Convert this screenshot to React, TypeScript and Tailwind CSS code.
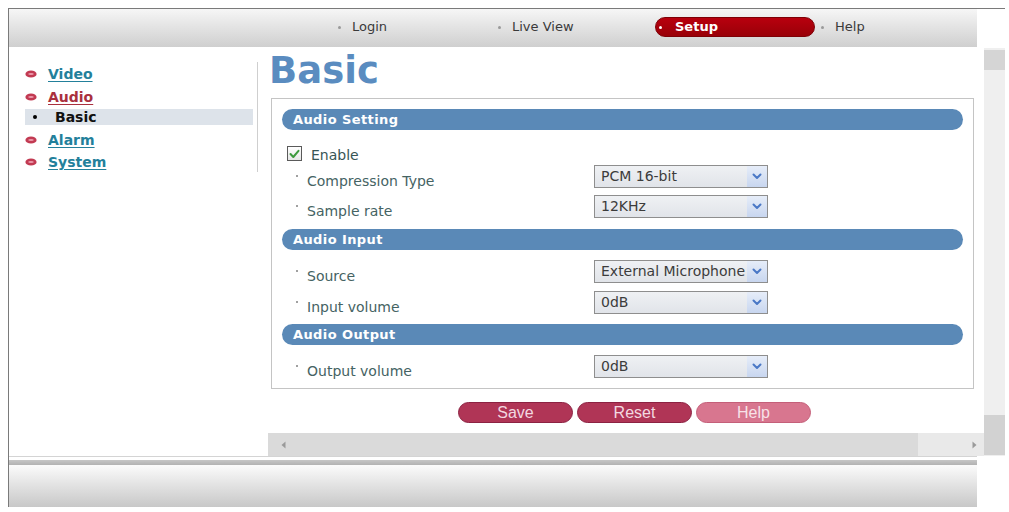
import React from "react";

function MenuIcon() {
  return (
    <svg width="12" height="8" viewBox="0 0 12 8" className="shrink-0">
      <ellipse cx="6" cy="4" rx="5.6" ry="3.6" fill="#c23a52" />
      <ellipse cx="6" cy="4" rx="2.8" ry="1.1" fill="#ec9aab" />
    </svg>
  );
}

function MenuLink({ label, color, mt }: { label: string; color: string; mt: string }) {
  return (
    <div className={`flex items-center h-[22px] pl-[16px] ${mt}`}>
      <MenuIcon />
      <span
        className={`ml-[11px] text-[14px] font-bold underline underline-offset-[2px] decoration-1 ${color}`}
      >
        {label}
      </span>
    </div>
  );
}

function Chevron() {
  return (
    <svg width="10" height="7" viewBox="0 0 10 7">
      <path d="M1.5 1.5 L5 5 L8.5 1.5" fill="none" stroke="#4a78c6" strokeWidth="2" strokeLinecap="round" strokeLinejoin="round" />
    </svg>
  );
}

function Select({ value }: { value: string }) {
  return (
    <div className="relative w-[174px] h-[23px] border border-[#8e8e8e] bg-linear-to-b from-[#eff1f4] to-[#e1e4e9] overflow-hidden">
      <span className="absolute left-[6px] top-0 leading-[21px] text-[14px] text-[#3c3c3c] whitespace-nowrap">{value}</span>
      <div className="absolute right-0 top-0 w-[20px] h-[21px] bg-linear-to-b from-[#e6edf9] to-[#c8d6ef] flex items-center justify-center">
        <Chevron />
      </div>
    </div>
  );
}

function Row({ label, value, mt }: { label: string; value: string; mt: string }) {
  return (
    <div className={`flex items-center h-[23px] ${mt}`}>
      <div className="w-[312px] flex items-center pl-[14px] pt-[8px]">
        <span className="w-[2px] h-[2px] bg-[#a0a0a0] relative top-[-5px]" />
        <span className="ml-[9px] text-[14px] text-[#456363] leading-[16px]">{label}</span>
      </div>
      <Select value={value} />
    </div>
  );
}

function Header({ label, mt }: { label: string; mt: string }) {
  return (
    <div className={`h-[21px] rounded-full bg-[#5a89b7] pl-[11px] text-white font-bold text-[13px] leading-[21px] tracking-[0.4px] ${mt}`}>
      {label}
    </div>
  );
}

function Btn({ label, light }: { label: string; light?: boolean }) {
  return (
    <div
      className={
        light
          ? "w-[115px] h-[21px] rounded-full bg-[#d8768f] border border-[#c45f79] text-[#f7e2e8] text-[16px] leading-[19px] text-center font-['Liberation_Sans',sans-serif]"
          : "w-[115px] h-[21px] rounded-full bg-[#b03556] border border-[#8c2242] text-[#f3d8e0] text-[16px] leading-[19px] text-center font-['Liberation_Sans',sans-serif]"
      }
    >
      {label}
    </div>
  );
}

export default function App() {
  return (
    <div className="w-[1009px] h-[512px] bg-white overflow-hidden font-['DejaVu_Sans',sans-serif]">
      <div className="ml-[8px] mt-[8px] w-[997px] h-[499px] border-t border-l border-[#7a7a7a] flex flex-col">
        {/* top nav */}
        <div className="h-[38px] w-[968px] shrink-0 bg-linear-to-b from-[#f6f6f6] to-[#cfcfcf] flex items-start pt-[8px] pl-[329px] text-[13px] text-[#3a3a3a]">
          <div className="w-[160px] h-[20px] flex items-center">
            <span className="w-[3px] h-[3px] rounded-full bg-[#9a9a9a]" />
            <span className="ml-[11px]">Login</span>
          </div>
          <div className="w-[157px] h-[20px] flex items-center">
            <span className="w-[3px] h-[3px] rounded-full bg-[#9a9a9a]" />
            <span className="ml-[11px]">Live View</span>
          </div>
          <div className="w-[160px] h-[20px] rounded-full bg-linear-to-b from-[#b8000e] to-[#990008] border border-[#7e0006] flex items-center pl-[3px]">
            <span className="w-[3px] h-[3px] rounded-full bg-white" />
            <span className="ml-[13px] font-bold text-white">Setup</span>
          </div>
          <div className="h-[20px] flex items-center pl-[6px]">
            <span className="w-[3px] h-[3px] rounded-full bg-[#9a9a9a]" />
            <span className="ml-[11px]">Help</span>
          </div>
        </div>
        <div className="h-[1px] shrink-0" />

        {/* content row */}
        <div className="flex h-[408px] shrink-0">
          {/* sidebar */}
          <div className="w-[249px] flex shrink-0">
            <div className="w-[248px] flex flex-col">
              <MenuLink label="Video" color="text-[#23809b]" mt="mt-[15px]" />
              <MenuLink label="Audio" color="text-[#a9303e]" mt="mt-[1px]" />
              <div className="ml-[16px] w-[228px] h-[16px] mt-[1px] bg-[#dde3ea] flex items-center">
                <span className="ml-[8px] w-[4px] h-[4px] rounded-full bg-black" />
                <span className="ml-[18px] text-[14px] font-bold text-[#111] leading-[16px]">Basic</span>
              </div>
              <MenuLink label="Alarm" color="text-[#23809b]" mt="mt-[4px]" />
              <MenuLink label="System" color="text-[#23809b]" mt="mt-[0px]" />
            </div>
            <div className="w-[1px] h-[110px] mt-[14px] bg-[#cfcfcf]" />
          </div>
          <div className="w-[10px] shrink-0" />

          {/* main frame */}
          <div className="w-[716px] flex flex-col shrink-0">
            <div className="h-[385px] flex flex-col">
              <div className="mt-[5px] ml-[1px] h-[36px] leading-[36px] text-[37px] font-bold text-[#5a8cc0]">Basic</div>
              <div className="mt-[9px] ml-[3px] w-[703px] border border-[#c4c4c4] px-[10px] pt-[10px] pb-[10px] flex flex-col">
                <Header label="Audio Setting" mt="mt-0" />
                <div className="mt-[16px] h-[15px] flex items-center pl-[5px]">
                  <div className="w-[15px] h-[15px] border border-[#5a5a5a] bg-linear-to-b from-[#ffffff] to-[#e6e6e6] flex items-center justify-center">
                    <svg width="11" height="10" viewBox="0 0 11 10">
                      <path d="M1.5 5 L4.3 8 L9.5 1.8" fill="none" stroke="#3e9a3e" strokeWidth="2" strokeLinecap="round" strokeLinejoin="round" />
                    </svg>
                  </div>
                  <span className="ml-[9px] text-[14px] text-[#385555] pt-[3px]">Enable</span>
                </div>
                <Row label="Compression Type" value="PCM 16-bit" mt="mt-[4px]" />
                <Row label="Sample rate" value="12KHz" mt="mt-[7px]" />
                <Header label="Audio Input" mt="mt-[11px]" />
                <Row label="Source" value="External Microphone" mt="mt-[10px]" />
                <Row label="Input volume" value="0dB" mt="mt-[8px]" />
                <Header label="Audio Output" mt="mt-[10px]" />
                <Row label="Output volume" value="0dB" mt="mt-[10px]" />
              </div>
              <div className="mt-[13px] pl-[190px] flex gap-[4px]">
                <Btn label="Save" />
                <Btn label="Reset" />
                <Btn label="Help" light />
              </div>
            </div>
            {/* horizontal scrollbar */}
            <div className="h-[23px] flex">
              <div className="w-[650px] h-full bg-[#dadada] flex items-center pl-[13px]">
                <svg width="5" height="8" viewBox="0 0 5 8">
                  <path d="M4.5 0.5 L0.5 4 L4.5 7.5 Z" fill="#9a9a9a" />
                </svg>
              </div>
              <div className="flex-1 h-full bg-[#e9e9e9] flex items-center justify-end pr-[7px]">
                <svg width="5" height="8" viewBox="0 0 5 8">
                  <path d="M0.5 0.5 L4.5 4 L0.5 7.5 Z" fill="#9a9a9a" />
                </svg>
              </div>
            </div>
          </div>

          {/* vertical scrollbar */}
          <div className="w-[21px] shrink-0 bg-[#efefef] flex flex-col">
            <div className="mt-[2px] h-[20px] bg-[#d5d5d5]" />
            <div className="flex-1" />
            <div className="h-[40px] mb-[1px] bg-[#d2d2d2]" />
          </div>
        </div>

        {/* bottom */}
        <div className="h-[1px] w-[968px] shrink-0 bg-[#d4d4d4]" />
        <div className="h-[3px] shrink-0" />
        <div className="h-[5px] w-[968px] shrink-0 bg-linear-to-b from-[#c6c6c6] to-[#b2b2b2]" />
        <div className="h-[42px] w-[968px] shrink-0 bg-linear-to-b from-[#fbfbfb] to-[#c8c8c8]" />
      </div>
    </div>
  );
}
